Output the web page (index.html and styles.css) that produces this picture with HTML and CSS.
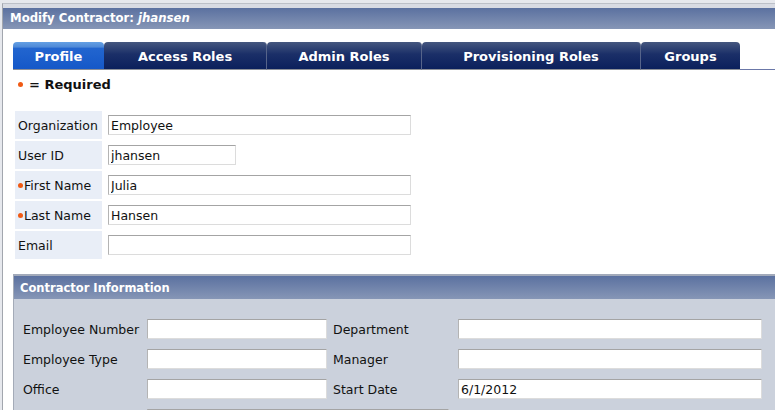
FILE: index.html
```html
<!DOCTYPE html>
<html lang="en">
<head>
  <meta charset="UTF-8">
  <title>Modify Contractor</title>
  <link rel="stylesheet" href="styles.css">
</head>
<body>
  <div class="frame">
    <div class="titlebar">Modify Contractor: <em>jhansen</em></div>

    <div class="content">
      <nav class="tabs">
        <a class="tab active" style="width:91px">Profile</a>
        <a class="tab" style="width:163px">Access Roles</a>
        <a class="tab" style="width:155px">Admin Roles</a>
        <a class="tab" style="width:219px">Provisioning Roles</a>
        <a class="tab" style="width:99px">Groups</a>
        <span class="tab-fill"></span>
      </nav>

      <p class="required"><span class="dot"></span>= Required</p>

      <table class="profile">
        <tr>
          <th>Organization</th>
          <td><input class="wide" type="text" value="Employee"></td>
        </tr>
        <tr>
          <th>User ID</th>
          <td><input class="short" type="text" value="jhansen"></td>
        </tr>
        <tr>
          <th><span class="dot"></span>First Name</th>
          <td><input class="wide" type="text" value="Julia"></td>
        </tr>
        <tr>
          <th><span class="dot"></span>Last Name</th>
          <td><input class="wide" type="text" value="Hansen"></td>
        </tr>
        <tr>
          <th>Email</th>
          <td><input class="wide" type="text" value=""></td>
        </tr>
      </table>

      <section class="panel">
        <h2>Contractor Information</h2>
        <div class="panel-grid">
          <label>Employee Number</label>
          <input class="col-a" type="text">
          <label>Department</label>
          <input class="col-b" type="text">

          <label>Employee Type</label>
          <input class="col-a" type="text">
          <label>Manager</label>
          <input class="col-b" type="text">

          <label>Office</label>
          <input class="col-a" type="text">
          <label>Start Date</label>
          <input class="col-b" type="text" value="6/1/2012">

          <label></label>
          <input class="col-wide" type="text">
        </div>
      </section>
    </div>
  </div>
</body>
</html>
```

FILE: styles.css
```css
:root {
  --bar-top: #5b71a0;
  --bar-bottom: #8696b6;
  --navy: #0b205c;
  --label-bg: #e9eef7;
  --panel-bg: #cbd1dc;
  --orange: #f05a14;
}
* { box-sizing: border-box; }
body {
  margin: 0;
  background: #e6e8ed;
  font-family: "DejaVu Sans", Verdana, sans-serif;
  font-size: 12.5px;
  color: #111;
  overflow: hidden;
}

.frame {
  margin: 3px 0 0 2px;
  border-top: 1px solid #bcc0c8;
  border-left: 1px solid #a2a6ae;
  background: #fff;
  min-height: 400px;
}
.titlebar {
  height: 25px;
  border-top: 4px solid #d8dbe3;
  background: linear-gradient(var(--bar-top), var(--bar-bottom));
  color: #fff;
  font-weight: bold;
  font-size: 11.7px;
  line-height: 21px;
  padding-left: 7px;
}
.titlebar em { font-style: italic; }

.content { padding: 13px 0 0 10px; }

/* tabs */
.tabs {
  display: flex;
  height: 28px;
}
.tab {
  flex: none;
  height: 28px;
  border-radius: 4px 4px 0 0;
  border-right: 1px solid #56648a;
  border-bottom: 1px solid #8c9098;
  background: linear-gradient(#45577f 0%, #1b2f68 45%, var(--navy) 100%);
  color: #fff;
  font-weight: bold;
  font-size: 13px;
  line-height: 29px;
  text-align: center;
}
.tab:last-of-type { border-right: none; }
.tab.active {
  background: linear-gradient(#64a0e4 0%, #4f8ad8 18%, #2265cf 24%, #1558c8 100%);
  border-right: none;
}
.tab-fill {
  flex: 1;
  border-bottom: 1px solid #6b78a8;
}

.dot {
  display: inline-block;
  width: 5px;
  height: 5px;
  border-radius: 50%;
  background: var(--orange);
  vertical-align: middle;
  margin: 0 1px 2px 0;
}
.required {
  margin: 8px 0 0 5px;
  line-height: 14px;
  font-weight: bold;
  font-size: 13px;
}
.required .dot { margin-right: 6px; }

/* profile table */
.profile {
  border-collapse: separate;
  border-spacing: 0 2px;
  margin: 17px 0 0 2px;
}
.profile th {
  width: 87px;
  height: 28px;
  padding: 0 0 0 3px;
  background: var(--label-bg);
  font-weight: normal;
  text-align: left;
  white-space: nowrap;
}
.profile td { padding: 0 0 0 6px; }

input {
  font: inherit;
  color: #111;
  height: 20px;
  padding: 0 2px;
  border: 1px solid;
  border-color: #a4a4a4 #dcdcdc #dcdcdc #b4b4b4;
  background: #fff;
  display: block;
}
.profile .wide { width: 303px; }
.profile .short { width: 128px; }

/* contractor panel */
.panel {
  margin-top: 13px;
  border-top: 2px solid #a2aaba;
  border-left: 1px solid #a4abb8;
  background: var(--panel-bg);
  height: 200px;
}
.panel h2 {
  margin: 0;
  height: 23px;
  background: linear-gradient(var(--bar-top), var(--bar-bottom));
  color: #fff;
  font-size: 11.5px;
  line-height: 24px;
  padding-left: 6px;
}
.panel-grid {
  display: grid;
  grid-template-columns: 124px 186px 125px 304px;
  row-gap: 10px;
  align-items: center;
  padding: 20px 0 0 9px;
}
.panel-grid label { white-space: nowrap; }
.panel-grid .col-a { width: 180px; }
.panel-grid .col-b { width: 304px; }
.panel-grid .col-wide { width: 302px; grid-column: 2 / 4; }
```
